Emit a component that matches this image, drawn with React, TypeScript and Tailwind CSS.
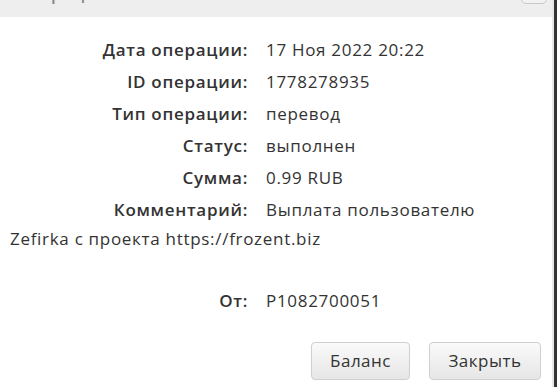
import React from "react";

const rows: [string, string][] = [
  ["Дата операции:", "17 Ноя 2022 20:22"],
  ["ID операции:", "1778278935"],
  ["Тип операции:", "перевод"],
  ["Статус:", "выполнен"],
  ["Сумма:", "0.99 RUB"],
  ["Комментарий:", "Выплата пользователю"],
];

const Row: React.FC<{ label: string; value: string }> = ({ label, value }) => (
  <div className="flex h-[32px] items-center">
    <div className="w-[248px] shrink-0 text-right font-semibold text-[#333]">{label}</div>
    <div className="pl-[18px] text-[#333]">{value}</div>
  </div>
);

export default function App() {
  return (
    <div
      className="flex h-[387px] w-[557px] overflow-hidden bg-[#333]"
      style={{ fontFamily: "'Open Sans', 'Liberation Sans', sans-serif" }}
    >
      <div className="flex w-[552px] flex-col overflow-hidden bg-white">
        {/* заголовок окна, верх обрезан */}
        <div className="-mt-[29px] flex h-[46px] shrink-0 items-center justify-between bg-[#eeeeee] pl-[15px] pr-[5px]">
          <span className="text-[17px] font-semibold tracking-[0.7px] text-[#888]">Операция № 1778278935</span>
          <button className="h-[24px] w-[26px] -translate-y-[2px] rounded-[5px] border border-[#c8c8c8] bg-[#f2f2f2] text-[12px] text-[#bbb]">
            ×
          </button>
        </div>
        <div className="flex flex-col pt-[17px] text-[17px] tracking-[0.7px]">
          {rows.map(([l, v]) => (
            <Row key={l} label={l} value={v} />
          ))}
          <div className="pl-[10px] text-[#333]">Zefirka с проекта https://frozent.biz</div>
          <div className="mt-[33px]">
            <Row label="От:" value="P1082700051" />
          </div>
        </div>
        <div className="mt-auto flex justify-end gap-[19px] pb-[7px] pr-[11px]">
          <button className="h-[38px] w-[99px] rounded-[4px] border border-[#cfcfcf] bg-gradient-to-b from-[#fafafa] to-[#e6e6e6] text-[17px] tracking-[0.5px] text-[#333]">
            Баланс
          </button>
          <button className="h-[38px] w-[112px] rounded-[4px] border border-[#cfcfcf] bg-gradient-to-b from-[#fafafa] to-[#e6e6e6] text-[17px] tracking-[0.5px] text-[#333]">
            Закрыть
          </button>
        </div>
      </div>
      <div className="w-[2px] bg-[#e8e8e8]" />
    </div>
  );
}
